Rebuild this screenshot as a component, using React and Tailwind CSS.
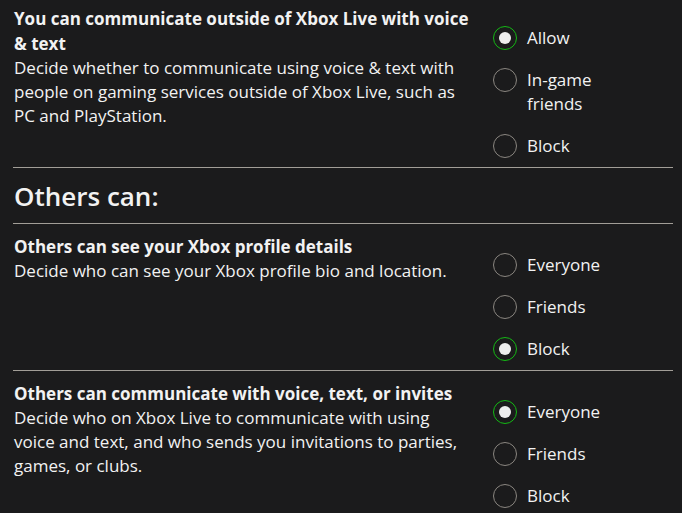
import React from "react";

function Radio({ label, checked }) {
  return (
    <div className="flex items-start py-[9px] leading-[24px]">
      <div
        className={
          "mr-[10px] flex h-[24px] w-[24px] shrink-0 items-center justify-center rounded-full border-[1.5px] " +
          (checked ? "border-[#14b814]" : "border-[#8a8680]")
        }
      >
        {checked && <div className="h-[12px] w-[12px] rounded-full bg-[#eeeeee]" />}
      </div>
      <div className="w-[80px] text-[17px] text-[#f2f2f2]">{label}</div>
    </div>
  );
}

function Section({ title, desc, options, checkedIndex, first }) {
  return (
    <div className={"flex border-b border-[#a29e97] " + (first ? "pt-[6px]" : "pt-[10px]")}>
      <div className="w-[477px] shrink-0 pl-[1px] pb-[12px]">
        <div className="w-[460px] text-[17px] font-bold leading-[25px] text-[#f2f2f2]">{title}</div>
        <div className="w-[460px] text-[17px] leading-[24px] text-[#f2f2f2]">{desc}</div>
      </div>
      <div className={"flex flex-col pl-[3px] " + (first ? "pt-[11px]" : "pt-[10px]")}>
        {options.map((o, i) => (
          <Radio key={o} label={o} checked={i === checkedIndex} />
        ))}
      </div>
    </div>
  );
}

export default function App() {
  return (
    <div
      className="h-[513px] w-[682px] overflow-hidden bg-[#1b1b1c] pl-[13px] pr-[9px]"
      style={{ fontFamily: "'Open Sans', sans-serif" }}
    >
      <Section
        first
        title="You can communicate outside of Xbox Live with voice & text"
        desc="Decide whether to communicate using voice & text with people on gaming services outside of Xbox Live, such as PC and PlayStation."
        options={["Allow", "In-game friends", "Block"]}
        checkedIndex={0}
      />
      <div className="border-b border-[#a29e97] pl-[1px] pt-[12px] pb-[10px] text-[26px] font-semibold leading-[33px] text-[#f2f2f2]">
        Others can:
      </div>
      <Section
        title="Others can see your Xbox profile details"
        desc="Decide who can see your Xbox profile bio and location."
        options={["Everyone", "Friends", "Block"]}
        checkedIndex={2}
      />
      <Section
        title="Others can communicate with voice, text, or invites"
        desc="Decide who on Xbox Live to communicate with using voice and text, and who sends you invitations to parties, games, or clubs."
        options={["Everyone", "Friends", "Block"]}
        checkedIndex={0}
      />
    </div>
  );
}
